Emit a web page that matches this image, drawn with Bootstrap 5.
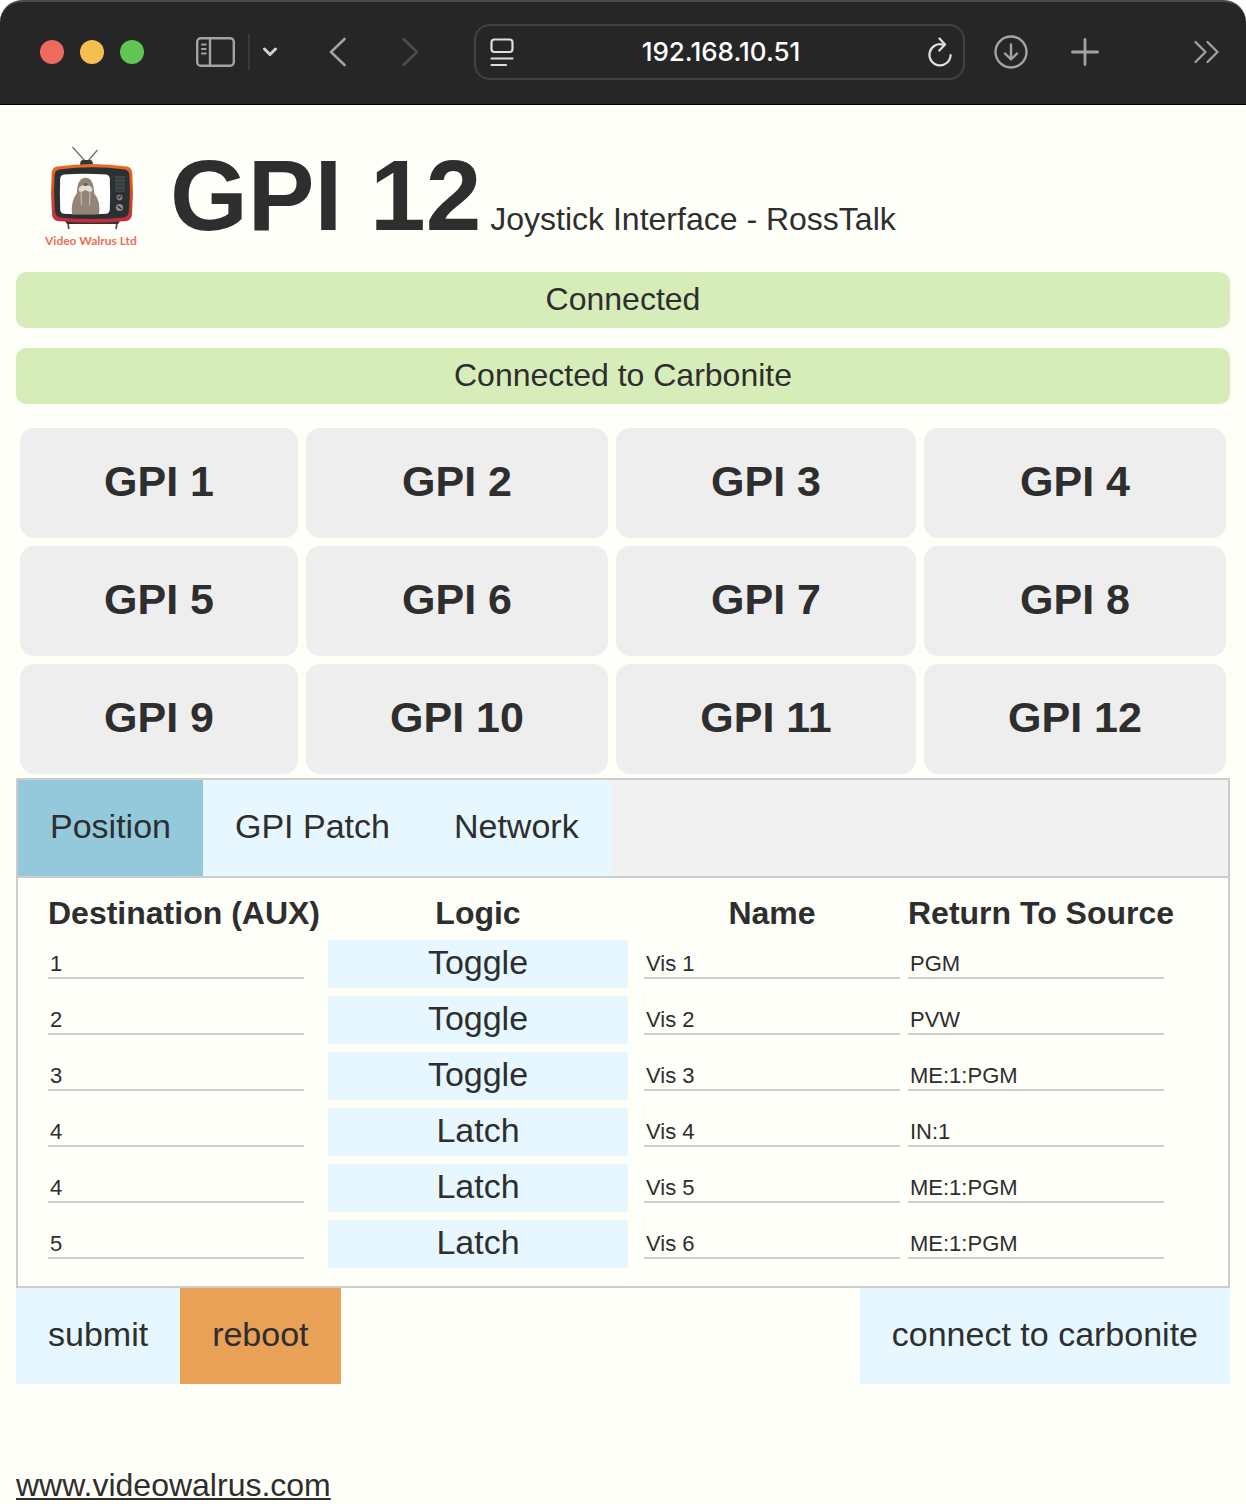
<!DOCTYPE html>
<html lang="en">
<head>
<meta charset="utf-8">
<meta name="viewport" content="width=device-width, initial-scale=1">
<title>GPI 12 Joystick Interface</title>
<link href="https://cdn.jsdelivr.net/npm/bootstrap@5.3.0/dist/css/bootstrap.min.css" rel="stylesheet">
<style>
  body { background: #fffffa; color: #2e2e2e; font-family: "Liberation Sans", Arial, sans-serif; font-size: 32px; line-height: 36px; }
  button { color: inherit; border: 0; }

  /* browser toolbar */
  .corner-fill { background: #fff; }
  .toolbar { background: #262626; height: 105px; padding: 0 27px 2px 40px; border-top: 2px solid #4c4c4c; border-bottom: 1px solid #000; border-radius: 22px 22px 0 0; }
  .toolbar svg { display: block; flex: none; fill: none; stroke-linecap: round; stroke-linejoin: round; }
  .tool { background: none; padding: 0; }
  .light { width: 24px; height: 24px; border-radius: 50%; padding: 0; }
  .light-red { background: #ed6a5e; }
  .light-yellow { background: #f5bf4f; }
  .light-green { background: #61c554; }
  .split { width: 2px; height: 36px; background: #393939; margin: 0 13px; }
  .address { height: 56px; border: 2px solid #414141; border-radius: 16px; margin: 0 29px 0 55px; padding: 0 10px 0 13px; }
  .address input { background: none; border: 0; color: #fff; font: 500 26px/32px Inter, sans-serif; text-align: center; outline: 0; }
  .new-tab { margin: 0 95px 0 43px; }

  /* page */
  .site-head { padding: 40px 24px 23px; }
  .brand { width: 104px; height: 104px; margin-right: 26px; }
  .site-head h1 { font-size: 100px; line-height: 100px; font-weight: 700; }
  .subtitle { font-size: 32px; margin-left: 9px; }
  .status { background: #d7edb9; border-radius: 10px; padding: 9px 0 11px; }
  .gpi-grid { display: grid; grid-template-columns: 278fr 302fr 300fr 302fr; gap: 8px; padding: 24px 4px 4px; }
  .gpi-cell { background: #eee; border-radius: 14px; font-size: 43px; line-height: 50px; font-weight: 700; padding: 28px 0 32px; }
  .tab-bar { background: #f1f1f1; border: 2px solid #ccc; }
  .flat-btn { background: #e6f7ff; font-size: 34px; line-height: 40px; padding: 26px 32px 30px; }
  .flat-btn.active { background: #94c9dc; }
  .flat-btn.warn { background: #e8a157; }
  .panel { border: 2px solid #ccc; border-top: 0; padding: 10px 26px 14px; overflow-x: auto; }
  .patch { border-collapse: collapse; }
  .patch th { padding: 5px 4px 3px; line-height: 40px; text-align: center; white-space: nowrap; }
  .patch td { padding: 4px; height: 56px; }
  .patch .name-col { padding-left: 12px; }
  .patch input { display: block; width: 256px; height: 30px; background: none; border: 0; border-bottom: 2px solid #ccc; border-radius: 0; padding: 2px 2px 0; color: inherit; font-size: 22px; line-height: 26px; outline: 0; }
  .patch button { display: block; width: 300px; background: #e6f7ff; font-size: 34px; line-height: 40px; padding: 2px 0 6px; }
  .dest-col { width: 280px; }
  .site-foot { padding-top: 83px; }
  .site-foot a { color: inherit; text-decoration-thickness: 2px; text-underline-offset: 2px; }
</style>
</head>
<body>
<div class="corner-fill">
  <header class="toolbar d-flex align-items-center">
    <div class="d-flex gap-3">
      <button class="light light-red" aria-label="Close"></button>
      <button class="light light-yellow" aria-label="Minimise"></button>
      <button class="light light-green" aria-label="Zoom"></button>
    </div>
    <button class="tool ms-5 ps-1" aria-label="Sidebar">
      <svg width="39" height="30" viewBox="0 0 39 30" stroke="#a3a3a3" stroke-width="2.4"><rect x="1.2" y="1.2" width="36.6" height="27.6" rx="3.5"/><path d="M14 1.500V28.500"/><path d="M5.800 7.500h4M5.800 12h4M5.800 16.500h4" stroke-width="1.800"/></svg>
    </button>
    <span class="split"></span>
    <button class="tool" aria-label="Tab groups">
      <svg width="14" height="10" viewBox="0 0 14 10" stroke="#d2d2d2" stroke-width="3"><path d="M1.500 2 7 7.500 12.500 2"/></svg>
    </button>
    <button class="tool ms-5 ps-1" aria-label="Back">
      <svg width="17" height="30" viewBox="0 0 17 30" stroke="#a3a3a3" stroke-width="2.600"><path d="M15.500 2 2 15 15.500 28"/></svg>
    </button>
    <button class="tool ms-5 ps-2" aria-label="Forward">
      <svg width="17" height="30" viewBox="0 0 17 30" stroke="#4c4c4c" stroke-width="2.600"><path d="M1.500 2 15 15 1.500 28"/></svg>
    </button>
    <div class="address d-flex align-items-center flex-grow-1">
      <svg width="26" height="30" viewBox="0 0 26 30" stroke="#dedede" stroke-width="2.200"><rect x="2.500" y="2.500" width="21" height="12.500" rx="3"/><path d="M2.500 21.500h21M2.500 28h14.500"/></svg>
      <input class="flex-grow-1" type="text" aria-label="Address" value="192.168.10.51" size="8">
      <button class="tool" aria-label="Reload">
        <svg width="26" height="30" viewBox="0 0 26 30" stroke="#dedede" stroke-width="2.200"><path d="M16 7.600A10.600 10.600 0 1 0 23.600 18"/><path d="M12.500 1.500 18 7.500 12.300 13.500"/></svg>
      </button>
    </div>
    <button class="tool" aria-label="Downloads">
      <svg width="34" height="34" viewBox="0 0 34 34" stroke="#a3a3a3" stroke-width="2.400"><circle cx="17" cy="17" r="15.500"/><path d="M17 9.500V24M11 18.500l6 6 6-6"/></svg>
    </button>
    <button class="tool new-tab" aria-label="New tab">
      <svg width="28" height="28" viewBox="0 0 28 28" stroke="#a3a3a3" stroke-width="2.800"><path d="M14 1.500v25M1.500 14h25"/></svg>
    </button>
    <button class="tool" aria-label="More">
      <svg width="25" height="24" viewBox="0 0 25 24" stroke="#a3a3a3" stroke-width="2.200"><path d="M1.500 2 11.500 12 1.500 22M13.500 2l10 10-10 10"/></svg>
    </button>
  </header>
</div>

<main class="px-3">
  <div class="site-head d-flex align-items-start">
    <svg class="brand flex-shrink-0" viewBox="40 145 104 104" role="img" aria-label="Video Walrus Ltd">
      <defs>
        <linearGradient id="shell" x1="0" y1="0" x2="0" y2="1"><stop offset="0" stop-color="#f06a25"/><stop offset=".6" stop-color="#c8452c"/><stop offset="1" stop-color="#c32a3c"/></linearGradient>
      </defs>
      <path d="M85 161 72.500 147M88 161l9.500-11" stroke="#6b6b6b" stroke-width="1.200" fill="none"/>
      <path d="M80 165q0-5 3-5h7q3 0 3 5z" fill="#34383a"/>
      <path d="M68 223l.8 6M117 223l-1 6" stroke="#555" stroke-width="1.800"/>
      <path d="M65 221h55l-2 3H67z" fill="#333"/>
      <path d="M57 166.500Q92 161.500 127 166.500 132 167.500 132.300 173 133.700 193 132 214 131.500 219.500 127 221 92 224.500 57 221 52.500 219.500 52 214 50.300 193 51.700 173 52 167.500 57 166.500z" fill="url(#shell)"/>
      <path d="M59 169.500Q92 165 125 169.500 129 170.500 129.500 175 130.500 193 129 211 128.500 216 124 217.500 92 220.500 60 217.500 55.500 216 55 211 53.500 193 54.500 175 55 170.500 59 169.500z" fill="#2b3032"/>
      <path d="M64 174.500q21-1.500 42 0 3.500.5 3.800 4 .6 15 0 31-.3 4-3.800 4.300-21 1-42 0-3.500-.3-3.800-4.300-.6-16 0-31 .3-3.500 3.800-4z" fill="#fff"/>
      <path d="M72 214Q70.500 201 77 193 77 178 85.500 177.700 94 178 94 193 101 201 99 214z" fill="#958578"/>
      <path d="M79 188q3-4 6.500-2 3.500-2 6.500 2 1 4-2 4-3-1-4.500-2-1.500 1-4.500 2-3 0-2-4z" fill="#e6ded6"/>
      <path d="M81 191l.5 14M90 191l-.5 14" stroke="#c9bfb5" stroke-width="1.100"/>
      <ellipse cx="85.500" cy="184.500" rx="2.300" ry="1.300" fill="#665950"/>
      <path d="M115 176h10v16h-10z" fill="#414648"/>
      <path d="M115 179h10M115 182.500h10M115 186h10M115 189.500h10" stroke="#303537"/>
      <circle cx="119.500" cy="197.500" r="3" fill="#8e7770"/><circle cx="119.500" cy="207.500" r="3.600" fill="#8c8f90"/>
      <path d="M118 198l3-2M117.500 206l4 3" stroke="#262b2d" stroke-width="1.400"/>
      <text x="45" y="245" font-family="Lato, sans-serif" font-size="12" font-weight="700" fill="#ed6e56">Video Walrus Ltd</text>
    </svg>
    <div class="d-flex align-items-baseline">
      <h1 class="m-0 text-nowrap">GPI 12</h1>
      <span class="subtitle">Joystick Interface - RossTalk</span>
    </div>
  </div>

  <div class="d-grid status-stack">
    <div class="status text-center" role="status">Connected</div>
    <div class="pt-1"></div>
    <div class="status text-center mt-3" role="status">Connected to Carbonite</div>
  </div>

  <div class="gpi-grid">
    <button class="gpi-cell">GPI 1</button><button class="gpi-cell">GPI 2</button><button class="gpi-cell">GPI 3</button><button class="gpi-cell">GPI 4</button>
    <button class="gpi-cell">GPI 5</button><button class="gpi-cell">GPI 6</button><button class="gpi-cell">GPI 7</button><button class="gpi-cell">GPI 8</button>
    <button class="gpi-cell">GPI 9</button><button class="gpi-cell">GPI 10</button><button class="gpi-cell">GPI 11</button><button class="gpi-cell">GPI 12</button>
  </div>

  <div class="tab-bar d-flex" role="tablist">
    <button class="flat-btn active" role="tab" aria-selected="true">Position</button>
    <button class="flat-btn" role="tab" aria-selected="false">GPI Patch</button>
    <button class="flat-btn" role="tab" aria-selected="false">Network</button>
  </div>

  <div class="panel">
    <table class="patch">
      <thead><tr><th class="dest-col">Destination (AUX)</th><th>Logic</th><th class="name-col">Name</th><th>Return To Source</th></tr></thead>
      <tbody>
        <tr><td><input type="text" aria-label="Destination 1" value="1"></td><td><button>Toggle</button></td><td class="name-col"><input type="text" aria-label="Name 1" value="Vis 1"></td><td><input type="text" aria-label="Return 1" value="PGM"></td></tr>
        <tr><td><input type="text" aria-label="Destination 2" value="2"></td><td><button>Toggle</button></td><td class="name-col"><input type="text" aria-label="Name 2" value="Vis 2"></td><td><input type="text" aria-label="Return 2" value="PVW"></td></tr>
        <tr><td><input type="text" aria-label="Destination 3" value="3"></td><td><button>Toggle</button></td><td class="name-col"><input type="text" aria-label="Name 3" value="Vis 3"></td><td><input type="text" aria-label="Return 3" value="ME:1:PGM"></td></tr>
        <tr><td><input type="text" aria-label="Destination 4" value="4"></td><td><button>Latch</button></td><td class="name-col"><input type="text" aria-label="Name 4" value="Vis 4"></td><td><input type="text" aria-label="Return 4" value="IN:1"></td></tr>
        <tr><td><input type="text" aria-label="Destination 5" value="4"></td><td><button>Latch</button></td><td class="name-col"><input type="text" aria-label="Name 5" value="Vis 5"></td><td><input type="text" aria-label="Return 5" value="ME:1:PGM"></td></tr>
        <tr><td><input type="text" aria-label="Destination 6" value="5"></td><td><button>Latch</button></td><td class="name-col"><input type="text" aria-label="Name 6" value="Vis 6"></td><td><input type="text" aria-label="Return 6" value="ME:1:PGM"></td></tr>
      </tbody>
    </table>
  </div>

  <div class="d-flex">
    <button class="flat-btn">submit</button>
    <button class="flat-btn warn">reboot</button>
    <button class="flat-btn ms-auto">connect to carbonite</button>
  </div>

  <footer class="site-foot"><a href="#">www.videowalrus.com</a></footer>
</main>
<script src="https://cdn.jsdelivr.net/npm/bootstrap@5.3.0/dist/js/bootstrap.bundle.min.js"></script>
</body>
</html>
